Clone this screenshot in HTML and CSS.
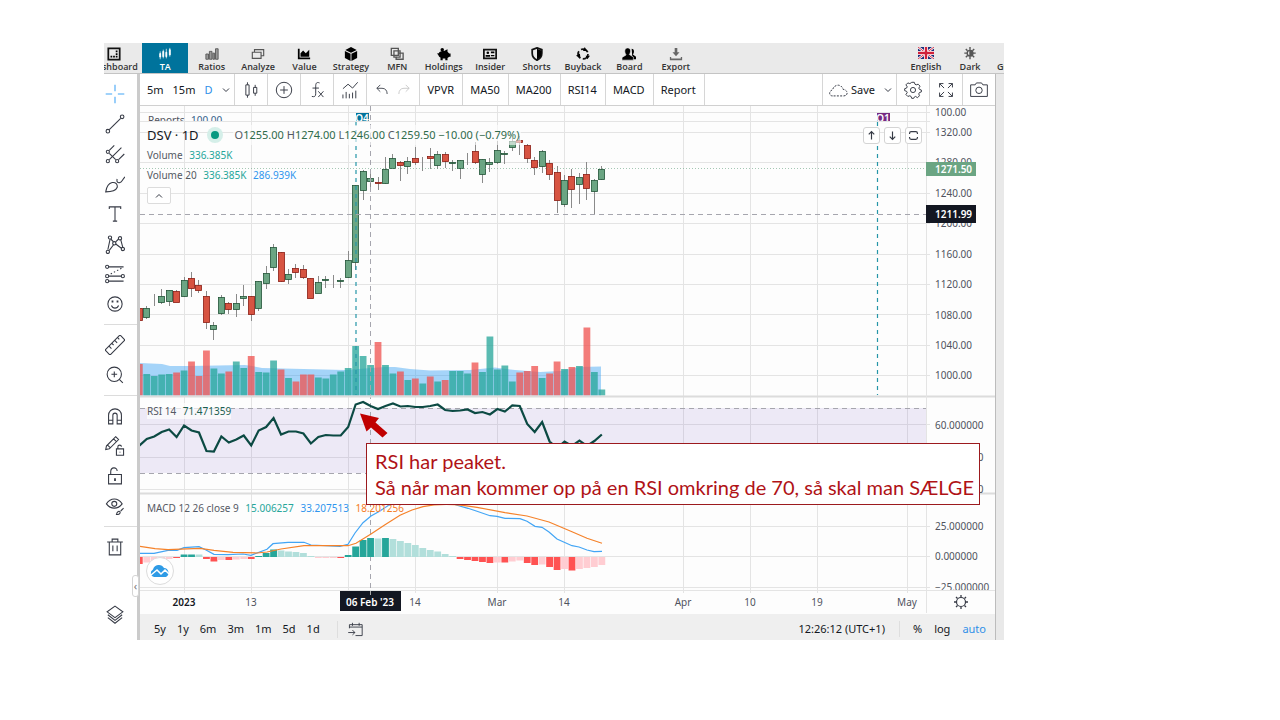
FILE: index.html
```html
<!DOCTYPE html>
<html lang="en">
<head>
<meta charset="utf-8">
<title>DSV – Technical analysis</title>
<link rel="stylesheet" href="styles.css">
</head>
<body>
<main class="app">
  <header class="topbar">
    <a class="tab tab-first" href="#"><svg viewBox="0 0 16 16"><path d="M1.500 1.500h13v13h-13z" fill="none" stroke="#111" stroke-width="2"/><path d="M4 10h2v2H4zM7 10h2v2H7zM10 10h2v2h-2zM10 7h2v2h-2zM10 4h2v2h-2z"/></svg>Dashboard</a>
    <nav class="tabs">
      <a class="tab tab-active" href="#"><svg viewBox="0 0 16 16" fill="#fff" stroke="#fff"><path d="M2.500 5v9M6 3v10M9.500 2v11M13.500 1v10" stroke-width=".8"/><path d="M2 7.500h1v4H2zM5.500 5h1v6h-1zM9 6h1v5H9zM13 3h1v6h-1z"/></svg>TA</a>
      <a class="tab" href="#"><svg viewBox="0 0 16 16" fill="#999" stroke="#555"><path d="M1 8h3v6H1zM5 5h3v9H5zM9 7h2v7H9zM12 2h3v12h-3z"/></svg>Ratios</a>
      <a class="tab" href="#"><svg viewBox="0 0 16 16" fill="none" stroke="#555" stroke-width="1.300"><path d="M1.500 6h10v7h-10zM4 6V3h10.500v7H11.500"/></svg>Analyze</a>
      <a class="tab" href="#"><svg viewBox="0 0 16 16"><path d="M1 2h2v10h12v2H1zM4 11V7l3-3 3 3 4-4v8z"/></svg>Value</a>
      <a class="tab" href="#"><svg viewBox="0 0 16 16"><path d="M8 0l6.500 3.300L8 6.700 1.500 3.300zM1 4.500l6.500 3.300V16L1 12.500zM15 4.500L8.500 7.800V16l6.500-3.500z"/></svg>Strategy</a>
      <a class="tab" href="#"><svg viewBox="0 0 16 16" fill="none" stroke="#555" stroke-width="1.500"><path d="M1.500 1.500h8v8h-8zM4.500 4.500h7v7h-7z"/><path d="M10 7h5v7H7v-3"/></svg>MFN</a>
      <a class="tab" href="#"><svg viewBox="0 0 16 16"><circle cx="6" cy="3" r="2"/><path d="M2 7c1-2 3-2.500 6-2.500l4-2v3l2 2h1.500v3.500H14L12 12.500V15H9.500v-2H6.500v2H4v-3C2 11 2 10 1.500 9L0 7.500z"/></svg>Holdings</a>
      <a class="tab" href="#"><svg viewBox="0 0 16 16"><path d="M1 3h14v10H1z" fill="none" stroke="#111" stroke-width="2"/><circle cx="5.500" cy="6.500" r="1.500"/><path d="M3 9h5v2H3zM9 5h4v2H9zM9 9h4v1.500H9z"/></svg>Insider</a>
      <a class="tab" href="#"><svg viewBox="0 0 16 16"><path d="M8 1l5.500 2v4c0 4-2.500 6.500-5.500 8-3-1.500-5.500-4-5.500-8V3z" fill="none" stroke="#111" stroke-width="2"/><path d="M8 2l5 2v4c0 3-2 5-5 6.500z"/></svg>Shorts</a>
      <a class="tab" href="#"><svg viewBox="0 0 16 16"><circle cx="8" cy="8" r="5.700" fill="none" stroke="#111" stroke-width="2" stroke-dasharray="9 2.900"/><path d="M10 0l2.500 4.500H8zM0 10l4.500-2.500.5 5zM11 10h5l-3 4z"/></svg>Buyback</a>
      <a class="tab" href="#"><svg viewBox="0 0 16 16"><path d="M11 2c3 0 3.500 4 1.500 6.500L16 11v3h-4z"/><path d="M6.500 1c4 0 4 5 1.800 7.500L13 11.500V15H0v-3l4.700-3C2.500 6 2.500 1 6.500 1z" stroke="#eaeaea" stroke-width=".7"/></svg>Board</a>
      <a class="tab" href="#"><svg viewBox="0 0 16 16" fill="#666"><path d="M6.500 1h3v5H12l-4 4.500L4 6h2.500zM1 11.500h1.500V13h11v-1.500H15V15H1z"/></svg>Export</a>
    </nav>
    <div class="settings">
      <a class="tab" href="#"><svg class="flag" viewBox="0 0 16 12"><path fill="#1b2f7a" d="M0 0h16v12H0z"/><path d="M0 0l16 12M16 0L0 12" stroke="#fff" stroke-width="2.400"/><path d="M0 0l16 12M16 0L0 12" stroke="#d0203a" stroke-width=".9"/><path d="M8 0v12M0 6h16" stroke="#fff" stroke-width="4"/><path d="M8 0v12M0 6h16" stroke="#d0203a" stroke-width="2.400"/></svg>English</a>
      <a class="tab" href="#"><svg viewBox="0 0 16 16" stroke="#555" stroke-width="1.600" fill="none"><circle cx="8" cy="7" r="3.200"/><path d="M8 4v6a3 3 0 0 0 0-6z" fill="#555"/><path d="M8 0v3M8 11v3M1.500 7h3M11.500 7h3M3.200 2.200l2 2M10.800 9.800l2 2M3.200 11.800l2-2M10.800 4.200l2-2"/></svg>Dark</a>
      <a class="tab tab-last" href="#">Guide</a>
    </div>
  </header>

  <div class="body">
    <aside class="drawing">
      <button aria-label="Cross"><svg viewBox="0 0 28 28" stroke="#42a5f5"><path d="M14 1v9M14 18v9M1 14h9M18 14h9"/></svg></button>
      <button aria-label="Trend line"><svg viewBox="0 0 28 28"><circle cx="4" cy="24" r="2.500"/><circle cx="24" cy="4" r="2.500"/><path d="M6 22L22 6"/></svg></button>
      <button aria-label="Pitchfork"><svg viewBox="0 0 28 28"><circle cx="4" cy="11" r="2.200"/><circle cx="4" cy="24" r="2.200"/><circle cx="17" cy="24" r="2.200"/><path d="M6 9l7-7M6 22L23 5M19 22l8-8M6 13l9 9"/></svg></button>
      <button aria-label="Brush"><svg viewBox="0 0 28 28"><path d="M1 25c1-6 4-12 9-13 5-1 8 3 7 7-2 5-8 6-16 6zM17 7c-1 4 1 6 4 5 3-1 3-4 7-8"/></svg></button>
      <button aria-label="Text"><svg viewBox="0 0 28 28"><path d="M6 7V4h16v3M14 4v20M11 24h6"/></svg></button>
      <button aria-label="Patterns"><svg viewBox="0 0 28 28"><circle cx="4" cy="25" r="2.300"/><circle cx="7" cy="5" r="2.300"/><circle cx="13" cy="13" r="2.300"/><circle cx="21" cy="6" r="2.300"/><circle cx="25" cy="21" r="2.300"/><path d="M4 22L7 8M8 7l4 4M15 11l4-4M22 8l3 11M6 23l6-8M15 14l8 6"/></svg></button>
      <button aria-label="Prediction"><svg viewBox="0 0 28 28"><circle cx="3" cy="4" r="2.200"/><circle cx="3" cy="17" r="2.200"/><circle cx="25" cy="17" r="2.200"/><circle cx="3" cy="24" r="2.200"/><path d="M5 4h21M5 17h18M5 24h21"/><path d="M8 14l15-8" stroke-dasharray="2 3"/></svg></button>
      <button aria-label="Icons"><svg viewBox="0 0 28 28"><circle cx="14" cy="14" r="10"/><path d="M9 16c2 5 8 5 10 0"/><path d="M10.500 9v3M17.500 9v3" stroke-width="2.500"/></svg></button>
      <hr>
      <button aria-label="Measure"><svg viewBox="0 0 28 28"><path d="M1 20L20 1q1-1 2 0l5 5q1 1 0 2L8 27q-1 1-2 0l-5-5q-1-1 0-2zM6 16l3 3M10 12l2 2M14 8l3 3M18 4l2 2"/></svg></button>
      <button aria-label="Zoom in"><svg viewBox="0 0 28 28"><circle cx="13" cy="13" r="10"/><path d="M13 9v8M9 13h8M20 20l5 5"/></svg></button>
      <hr>
      <button aria-label="Magnet"><svg viewBox="0 0 28 28"><path d="M5 25V13a9 9 0 0 1 18 0v12h-6V13a3 3 0 0 0-6 0v12zM5 20h6M17 20h6"/></svg></button>
      <button aria-label="Stay in drawing mode"><svg viewBox="0 0 28 28"><path d="M2 14L15 1l4 4L6 18l-5 1zM12 4l4 4M4 13l4 4M16 18h10v9H16zM18 18v-3c0-3 5-3 5 0M21 22v1"/></svg></button>
      <button aria-label="Lock drawings"><svg viewBox="0 0 28 28"><path d="M5 12h18v13H5zM8 12V8c0-7 9-7 9-1"/><path d="M14 17v4" stroke-width="2.500"/></svg></button>
      <button aria-label="Hide drawings"><svg viewBox="0 0 28 28"><path d="M2 11C8 2 18 2 24 11 18 19 8 19 2 11z"/><circle cx="13" cy="11" r="3.500"/><path d="M16 26c1-5 4-5 5-4 1 3-2 4-5 4zM22 21l4-4"/></svg></button>
      <hr>
      <button aria-label="Remove"><svg viewBox="0 0 28 28"><path d="M3 7h22M6 7v18h16V7M10 7V3h8v4M11 12v8M17 12v8"/></svg></button>
      <button class="layers" aria-label="Object tree"><svg viewBox="0 0 28 28"><path d="M14 3l11 8-11 8L3 11zM4 15l10 8 10-8M4 19l10 8 10-8"/></svg></button>
      <button class="collapse" aria-label="Collapse">‹</button>
    </aside>

    <section class="main">
      <div class="toolbar">
        <div class="group intervals"><button>5m</button><button>15m</button><button class="on">D</button><button aria-label="More intervals"><svg class="chev" viewBox="0 0 10 10"><path d="M2 3.500l3 3 3-3"/></svg></button></div>
        <button class="group icon" aria-label="Candles"><svg viewBox="0 0 28 28"><path d="M6 6h5v16H6zM8.500 2v4M8.500 22v4M18 10h5v9h-5zM20.500 6v4M20.500 19v4"/></svg></button>
        <button class="group icon" aria-label="Compare"><svg viewBox="0 0 28 28"><circle cx="14" cy="14" r="12"/><path d="M14 8v12M8 14h12"/></svg></button>
        <button class="group icon" aria-label="Indicators"><svg viewBox="0 0 28 28"><path d="M18 3c-5-2-6 1-6 5v12c0 4-2 5-6 4M7 11h10M16 16l8 9M24 16l-8 9"/></svg></button>
        <button class="group icon" aria-label="Templates"><svg viewBox="0 0 28 28"><path d="M3 12l8-7 7 6 8-9M3 21v6M8 17v10M13 20v7M18 18v9M23 15v12"/></svg></button>
        <div class="group history"><button aria-label="Undo"><svg viewBox="0 0 28 28"><path d="M11 5L5 11l6 6M5 11h9c6 0 9 4 9 10"/></svg></button><button aria-label="Redo" disabled><svg viewBox="0 0 28 28"><path d="M17 5l6 6-6 6M23 11h-9c-6 0-9 4-9 10"/></svg></button></div>
        <button class="group">VPVR</button><button class="group">MA50</button><button class="group">MA200</button><button class="group">RSI14</button><button class="group">MACD</button><button class="group">Report</button>
        <div class="right">
          <button class="group save"><svg viewBox="0 0 32 24"><path d="M7 21C1 21 1 13 7 12 8 4 20 1 23 11c8 1 8 10 1 10z" stroke-dasharray="3 2"/></svg>Save<svg class="chev" viewBox="0 0 10 10"><path d="M2 3.500l3 3 3-3"/></svg></button>
          <button class="group icon" aria-label="Settings"><svg viewBox="0 0 28 28"><path d="M12 2h4l1 3 2 1 3-1 3 3-2 3 1 2 3 1v3l-3 1-1 2 1 3-3 3-3-2-2 1-1 2h-3l-1-3-2-1-3 1-3-3 2-3-1-2-3-1v-3l3-1 1-2-2-3 3-3 3 1 2-1z"/><circle cx="14" cy="14" r="4"/></svg></button>
          <button class="group icon" aria-label="Fullscreen"><svg viewBox="0 0 28 28"><path d="M4 10V4h6M4 4l7 7M24 10V4h-6M24 4l-7 7M4 18v6h6M4 24l7-7M24 18v6h-6M24 24l-7-7"/></svg></button>
          <button class="group icon camera" aria-label="Snapshot"><svg viewBox="0 0 28 28"><path d="M1 6h7l2-3h8l2 3h7v18H1z"/><circle cx="14" cy="14.500" r="5"/></svg></button>
        </div>
      </div>

      <div class="chart">
        <svg id="chart" viewBox="140 106 855 508" role="img" aria-label="DSV daily candles with RSI and MACD"></svg>
        <div class="legend price-legend">
          <p class="symbol"><strong>DSV · 1D</strong><i class="status"></i><span class="ohlc">O<b>1255.00</b> H<b>1274.00</b> L<b>1246.00</b> C<b>1259.50</b> <b>−10.00 (−0.79%)</b></span></p>
          <p>Volume <span class="teal">336.385K</span></p>
          <p>Volume 20 <span class="teal">336.385K</span> <span class="blue">286.939K</span></p>
          <button aria-label="Collapse legend"><svg class="chev" viewBox="0 0 10 10"><path d="M2 6.500l3-3 3 3"/></svg></button>
        </div>
        <div class="pane-tools">
          <button aria-label="Move pane up"><svg viewBox="0 0 14 14"><path d="M7 12V2M3.500 5.500L7 2l3.500 3.500"/></svg></button>
          <button aria-label="Move pane down"><svg viewBox="0 0 14 14"><path d="M7 2v10M3.500 8.500L7 12l3.500-3.500"/></svg></button>
          <button aria-label="Maximize pane"><svg viewBox="0 0 14 14"><path d="M2 5V4q0-2 2-2h6q2 0 2 2v1M2 9v1q0 2 2 2h6q2 0 2-2V9"/></svg></button>
        </div>
        <p class="legend rsi-legend">RSI 14 <span class="green">71.471359</span></p>
        <p class="legend macd-legend">MACD 12 26 close 9 <span class="teal">15.006257</span> <span class="blue">33.207513</span> <span class="orange">18.201256</span></p>
        <div class="logo"><svg viewBox="0 0 20 14"><path d="M4 13a4 4 0 0 1-1-7.500A6 6 0 0 1 14 4a4.800 4.800 0 0 1 2 9z" fill="#2e9be6"/><path d="M1 11l6-5 4 4 4-4 4 4" fill="none" stroke="#fff" stroke-width="1.500"/></svg></div>
        <div class="callout"><p>RSI har peaket.</p><p>Så når man kommer op på en RSI omkring de 70, så skal man SÆLGE</p></div>
      </div>

      <footer class="ranges">
        <button>5y</button><button>1y</button><button>6m</button><button>3m</button><button>1m</button><button>5d</button><button>1d</button>
        <button class="goto" aria-label="Go to date"><svg viewBox="0 0 28 28"><path d="M4 12V6h21v18H14M4 10h21M9 3v5M20 3v5M2 19h11M9 15l4 4-4 4"/></svg></button>
        <span class="clock">12:26:12 (UTC+1)</span>
        <span class="scales"><button>%</button><button>log</button><button class="on">auto</button></span>
      </footer>
    </section>
    <div class="rail"></div>
  </div>
</main>
<script src="script.js"></script>
</body>
</html>
```

FILE: styles.css
```css
* { box-sizing: border-box; }
body {
  margin: 0;
  padding: 43px 276px 40px 104px;
  background: #fff;
  color: #2a2e39;
  font: 11px/16px "Noto Sans", sans-serif;
}
p { margin: 0; }
button { border: 0; padding: 0; background: none; color: inherit; font: inherit; }
svg { display: block; }
a { color: inherit; text-decoration: none; }

.topbar { display: flex; height: 31px; overflow: hidden; background: #eaeaea; border-bottom: 1px solid #c4c4c4; }
.tabs { display: flex; flex: 0 1 557px; }
.tab { display: flex; flex: 1; flex-direction: column; align-items: center; min-width: 0; padding-top: 4px; font: 600 9px/10px "Open Sans", sans-serif; color: #333; white-space: nowrap; }
.tab svg { width: 14px; height: 14px; margin-bottom: 1px; }
.tab-first { flex: 0 0 46px; margin: 0 5px 0 -13px; }
.tab-active { background: #00739c; color: #fff; }
.settings { display: flex; flex: none; margin-left: auto; }
.settings .tab { flex: 0 0 44px; }
.settings .tab-last { flex: 0 0 12px; align-items: flex-start; padding: 19px 0 0 5px; overflow: hidden; }
.tab .flag { width: 16px; height: 12px; margin: 0 0 3px; }

.body { display: flex; }
.drawing { position: relative; display: flex; flex: 0 0 36px; flex-direction: column; padding: 5px 0 11px; background: #fff; border-right: 3px solid #cbcbcb; }
.drawing button { display: flex; align-items: center; justify-content: center; height: 30px; padding-right: 11px; }
.drawing svg { width: 20px; height: 20px; }
.drawing hr { width: 100%; height: 1px; margin: 5px 0; border: 0; background: #dcdcdc; }
.drawing .layers { margin-top: auto; }
.drawing .collapse { position: absolute; right: -2px; top: 501px; width: 7px; height: 22px; padding: 0; background: #fff; border: 1px solid #d5d5d5; border-radius: 3px; color: #777; }
.drawing svg, .toolbar svg, .ranges svg, .pane-tools svg, .chev { fill: none; }
.drawing svg:not([stroke]), .toolbar svg, .ranges svg, .pane-tools svg, .chev { stroke: #363a45; }
.drawing svg, .toolbar svg, .ranges svg { stroke-width: 1.5; }

.main { flex: 1; min-width: 0; background: #fdfdfd; }
.rail { flex: 0 0 9px; background: #e9e9e9; border-left: 1px solid #bcbcbc; }

.toolbar { display: flex; height: 32px; background: #fff; border-bottom: 1px solid #d0d0d0; color: #131722; }
.toolbar .group { display: flex; align-items: center; justify-content: center; padding: 0 8px 0 7px; border-right: 1px solid #d6d6d6; }
.toolbar .intervals { gap: 9px; padding: 0 3px 0 7px; }
.toolbar .icon { width: 33px; padding: 0; }
.toolbar svg { width: 18px; height: 18px; }
.toolbar .history { gap: 6px; padding: 0 7px; }
.history svg { width: 16px; height: 16px; }
.history button:disabled svg { stroke: #c4c4c4; }
.toolbar .chev { width: 10px; height: 10px; stroke-width: 1; }
.on { color: #2f8fe8; }
.right { display: flex; margin-left: auto; }
.right .group:first-child { border-left: 1px solid #d6d6d6; }
.toolbar .save { gap: 2px; padding: 0 3px 0 5px; }
.save svg { width: 21px; height: 16px; }
.save .chev { margin-left: 6px; }
.toolbar .camera { width: 32px; border-right: 0; }

.chart { position: relative; }
#chart { width: 100%; height: auto; }
.legend { position: absolute; left: 7px; color: #555963; font-size: 10px; white-space: nowrap; }
.legend span { margin-left: 4px; }
.price-legend { top: 19px; line-height: 20px; }
.symbol { display: flex; align-items: center; color: #131722; }
.symbol strong { font-weight: 400; font-size: 13px; }
.status { width: 8px; height: 8px; margin: 0 10px 0 12px; border-radius: 50%; background: #089981; box-shadow: 0 0 0 4px #d5efe9; }
.ohlc { padding: 0 2px; color: #555963; font-size: 11px; background: rgba(253, 253, 253, .6); }
.ohlc b { font-weight: 400; color: #2f6b4b; }
.price-legend button { display: flex; align-items: center; justify-content: center; width: 24px; height: 17px; margin-top: 2px; background: #fff; border: 1px solid #dcdcdc; border-radius: 2px; }
.chev { width: 10px; height: 10px; }
.teal { color: #26a69a; }
.blue { color: #2f95ee; }
.green { color: #1b5e50; }
.orange { color: #f57c1f; }
.rsi-legend { top: 297px; background: rgba(253, 253, 253, .7); }
.macd-legend { top: 394px; }
.pane-tools { position: absolute; top: 21px; right: 73px; display: flex; gap: 4px; }
.pane-tools button { display: flex; align-items: center; justify-content: center; width: 17px; height: 17px; background: #fff; border: 1px solid #d4d4d4; border-radius: 3px; }
.pane-tools svg { width: 11px; height: 11px; stroke-width: 1.5; }
.logo { position: absolute; left: 6px; top: 451px; display: flex; align-items: center; justify-content: center; width: 28px; height: 28px; background: #fff; border: 1px solid #dcdcdc; border-radius: 50%; }
.logo svg { width: 20px; height: 14px; }
.callout { position: absolute; left: 226px; right: 15px; top: 337px; padding: 4px 0 4px 8px; border: 1px solid #9c1a1e; background: #fff; color: #b01216; font: 20px/26px Lato, sans-serif; white-space: nowrap; }

.grid { stroke: #e4e4e4; fill: none; }
.separator { stroke: #dcdcdc; stroke-width: 2; }
.dash { stroke: #a6a6ae; stroke-dasharray: 5 4; fill: none; }
.event { stroke: #2596a8; stroke-width: 1.2; stroke-dasharray: 4 4; fill: none; }
.axis { font-size: 10px; fill: #50535e; }
.mid { text-anchor: middle; }
.strong { font-weight: 600; fill: #131722; }
.inverse { font-weight: 600; fill: #fff; }

.ranges { display: flex; align-items: center; gap: 11px; height: 26px; padding: 4px 9px 0 14px; background: #efefef; color: #131722; }
.ranges svg { width: 17px; height: 17px; }
.goto { margin-left: 6px; padding-left: 9px; border-left: 1px solid #dedede; }
.clock { margin-left: auto; }
.scales { display: flex; gap: 12px; margin-left: 3px; padding-left: 13px; border-left: 1px solid #dedede; }
```

FILE: script.js
```js
const STEP = 7.46;
const FIRST = 139.3;
const x = i => FIRST + STEP * i;
const el = [];
const rect = (x0, y0, w, h, fill, extra = '') =>
  el.push(`<rect x="${x0}" y="${y0}" width="${w}" height="${h}" fill="${fill}" ${extra}/>`);
const path = (d, attrs) => el.push(`<path d="${d}" ${attrs}/>`);
const text = (tx, ty, cls, s, extra = '') =>
  el.push(`<text x="${tx}" y="${ty}" class="${cls}" ${extra}>${s}</text>`);

// direction, body top, body bottom, high, low
const candles = `r 308 320 308 320|g 308 317 306 319|g 304 304 294 306|g 296 302 289 304|g 290 301 290 306|r 291 302 290 302|g 280 296 277 297|r 278 288 272 297|r 285 290 280 293|r 296 322 291 329|g 325 329 322 340|g 297 313 295 315|r 303 309 302 314|g 303 309 294 317|g 296 298 285 306|r 296 314 296 321|g 281 308 281 311|g 273 283 266 289|g 247 267 244 271|r 252 281 252 282|g 274 279 269 284|r 268 272 264 278|r 269 277 265 279|r 278 298 278 298|g 282 293 276 293|g 279 280 276 288|g 280 280 275 288|g 280 281 278 288|g 260 277 251 278|g 185 262 185 270|g 171 190 170 200|g 178 181 170 190|r 182 183 177 190|g 169 183 157 184|g 158 168 154 169|r 162 165 161 181|g 161 166 157 174|r 158 162 147 165|g 163 163 157 171|r 156 158 148 169|g 154 165 151 169|r 154 161 152 168|g 162 163 160 171|g 160 168 160 179|g 158 158 153 165|r 151 162 142 164|g 159 174 159 183|g 162 164 158 172|g 150 162 141 164|g 153 154 151 164|g 141 147 138 151|r 140 142 136 155|r 145 158 144 163|r 160 167 157 175|g 151 166 150 173|r 163 174 160 180|r 172 200 166 213|g 180 204 175 207|r 176 189 169 208|g 177 184 173 204|r 174 188 162 200|g 180 191 179 214|g 169 179 166 180`
  .split('|').map(c => c.split(' '));

const volumes = [364,374,376,374.5,374,372.5,370.5,361.5,376,350.5,368.5,373.5,371.5,361.5,368,356,372,372.5,360.5,369.5,378,381.5,374.5,374.5,377.5,378.5,374.5,371.5,368,346,356,365,342,365,373.5,371.5,380,378.5,383.5,376.5,381.5,380,371,371,373.5,362.5,372,336.5,369.5,365.5,381.5,372.5,371,366,378,373.5,361.5,369,367,366,327.5,372,389.5];

const rsi = [445.7,439,436.5,432,429.5,437,425.5,430.5,432.5,451,451.5,436.5,442.5,439.5,435.5,445.5,430.5,427,418,434.5,431.5,431.5,433.5,443.5,437,435,435.5,435.5,427,404.5,402,406,409,406,403.5,406.5,406,407,407,406,404.5,410,411,410.5,409.5,413,412,414.5,409,411.5,405.5,406,424,432,422,441.5,448,441.5,446,440.5,446,441,434.5];

// R/P: falling or rising below zero, T/L: rising or falling above zero
const histogram = 'R564 P562.5 P561 P560 P559 R558 T554.5 T554.5 L554.5 R559 R561.5 P560 R560 P559.5 P559 R559 T556 T553 T549.5 L550.5 L551.5 L552 L553 L556 P558 P558 P558 R558 T555 T546.5 T540 T538 L538.5 T538 L539 L541 L543 L545 L548 L550 L551.5 L554 L556 R559 R560 R561 R562 R563 P562.5 R562.5 P561.5 P560.5 R563 R565 P564.5 R567 R570 P569 R570.5 P569 P568 P567 P565'.split(' ');
const histColors = { R: '#ff5252', P: '#ffcdd2', T: '#26a69a', L: '#b2dfdb' };

const macdLine = 'M140 553.3H154L168 550.3H177L184 547.6 199 546.7 206 550 214 554.3 228 554.7 243 554 251 555.3 267 549.3 273 543.7 288 542.3H304L311 545 340 546.3 348 544.3 355 533 363 522.7 371 516 380 511C400 495 430 495 457 505.3L468 508.3 477 511.3 490 515.7 497 516.3 505 518.3 520 518.7 527 521.3 535 526.3 542 527.3 549 532 557 539 572 545.7 579 547 587 550 594 551.7 602 551.3';
const signalLine = 'M140 546.3L155 548.7 168 549.7 200 548.3 214 550.3 233 552.3 257 553 267 552 281 549 304 545.7H348L356 543.3 371 534 385 524.7 400 515.3 412 510 423 506.7Q440 503 463 505.3L477 507.3 505 512.7 527 516 549 522 572 531.7 587 538.3 602 543.3';

// Grid
const columns = [184, 251, 348, 415, 497, 564, 683, 750, 817, 907];
columns.forEach(c => path(`M${c}.500 106V593`, 'class="grid"'));
[112, 121, 132, 162, 193, 223, 254, 284, 314, 345, 375, 424, 457, 489, 526, 556, 587]
  .forEach(r => path(`M140 ${r}.500H930`, 'class="grid"'));
rect(140, 408, 786, 65, '#7e57c2', 'opacity=".12"');
path('M140 408.500H926M140 473.500H926', 'class="dash"');

// Volume with its moving average behind the bars
path('M140 363L162 364 170 366H190L245 365 252 366 262 368 345 370 385 367H395L410 369 430 370.500 470 370 495 367.500 515 370 540 372 560 371 580 367 601 366.500V395.500H140z', 'fill="#2196f3" fill-opacity=".4"');
candles.forEach((c, i) => {
  const left = Math.max(140, x(i) - 3.4);
  rect(left, volumes[i], x(i) + 3.4 - left, 395.5 - volumes[i], c[0] === 'g' ? '#26a69a' : '#ef5350', 'opacity=".76"');
});

// Candles
candles.forEach(([dir, top, bottom, high, low], i) => {
  const up = dir === 'g';
  const cx = Math.round(x(i) - 0.5) + 0.5;
  path(`M${cx} ${high}V${low}`, 'stroke="#8a8a8a"');
  rect(cx - 3, +top + 0.5, 6, bottom - top, up ? '#6ba583' : '#d75442', `stroke="${up ? '#225437' : '#8b1d14'}" stroke-width="0.800"`);
});

// Price, crosshair and event lines
path('M140 168.500H926', 'stroke="#6ba583" stroke-opacity=".6" stroke-dasharray="1 2"');
path('M140 214.500H930M370.500 106V593', 'class="dash"');
path('M356 122V395M877.500 122V395', 'class="event"');

// RSI and MACD
path('M' + rsi.map((v, i) => `${x(i)} ${v}`).join('L'), 'fill="none" stroke="#0c4a43" stroke-width="2.200"');
histogram.forEach((h, i) => {
  const v = +h.slice(1);
  const left = Math.max(140, x(i) - 3.4);
  rect(left, Math.min(v, 557), x(i) + 3.4 - left, Math.abs(v - 557), histColors[h[0]]);
});
path(macdLine, 'fill="none" stroke="#42a5f5" stroke-width="1.200"');
path(signalLine, 'fill="none" stroke="#f5822a" stroke-width="1.200"');

// Pane separators and axes
path('M140 396.500H995M140 493.500H995', 'class="separator"');
path('M140 590.500H995M926.500 106V613', 'class="grid"');
[['100.00', 112], ['1320.00', 132], ['1280.00', 162], ['1240.00', 193], ['1200.00', 223], ['1160.00', 254], ['1120.00', 284], ['1080.00', 315], ['1040.00', 345], ['1000.00', 375], ['60.000000', 425], ['40.000000', 457], ['20.000000', 489], ['25.000000', 526], ['0.000000', 556]]
  .forEach(([s, y]) => text(935, y + 4, 'axis', s));
text(935, 591, 'axis', '−25.000000', 'clip-path="url(#macdClip)"');
rect(926, 162, 50, 14, '#6ba583');
text(935, 173, 'axis inverse', '1271.50');
rect(926, 205, 50, 18, '#131722');
text(935, 218, 'axis inverse', '1211.99');
[['2023', 184, 'strong'], ['13', 251, ''], ['14', 415, ''], ['Mar', 497, ''], ['14', 564, ''], ['Apr', 683, ''], ['10', 750, ''], ['19', 817, ''], ['May', 907, '']]
  .forEach(([s, cx, cls]) => text(cx, 606, `axis mid ${cls}`, s));
rect(340, 591, 61, 20, '#131722');
text(370, 606, 'axis mid inverse', '06 Feb \'23');
path('M370.500 591v4', 'stroke="#aaa"');
path('M961 597v-2M961 607v2M956 602h-2M966 602h2M957.500 598.500l-1.500-1.500M964.500 598.500l1.500-1.500M957.500 605.500l-1.500 1.500M964.500 605.500l1.500 1.500', 'stroke="#363a45" stroke-width="1.300"');
el.push('<circle cx="961" cy="602" r="4.500" fill="none" stroke="#363a45" stroke-width="1.200"/>');

// Reports row, cut off by the price pane
el.push('<clipPath id="reportClip"><path d="M140 107h786v14H140z"/></clipPath><clipPath id="macdClip"><path d="M926 570h69v20h-69z"/></clipPath><g clip-path="url(#reportClip)">');
text(148, 124, 'axis', 'Reports');
text(191, 124, 'axis', '100.00', 'style="fill:#34608a"');
rect(356, 113, 13, 12, '#00739c');
text(362, 122, 'axis mid inverse', 'Q4');
rect(877, 113, 13, 12, '#762a83');
text(883, 122, 'axis mid inverse', 'Q1');
el.push('</g>');

// Arrow pointing at the RSI peak
path('M360 413.500L379 418 375.500 422.500 387.500 433 382.500 437.500 371 427.500 366.500 431.500z', 'fill="#c00000"');

document.getElementById('chart').innerHTML = el.join('');
```
